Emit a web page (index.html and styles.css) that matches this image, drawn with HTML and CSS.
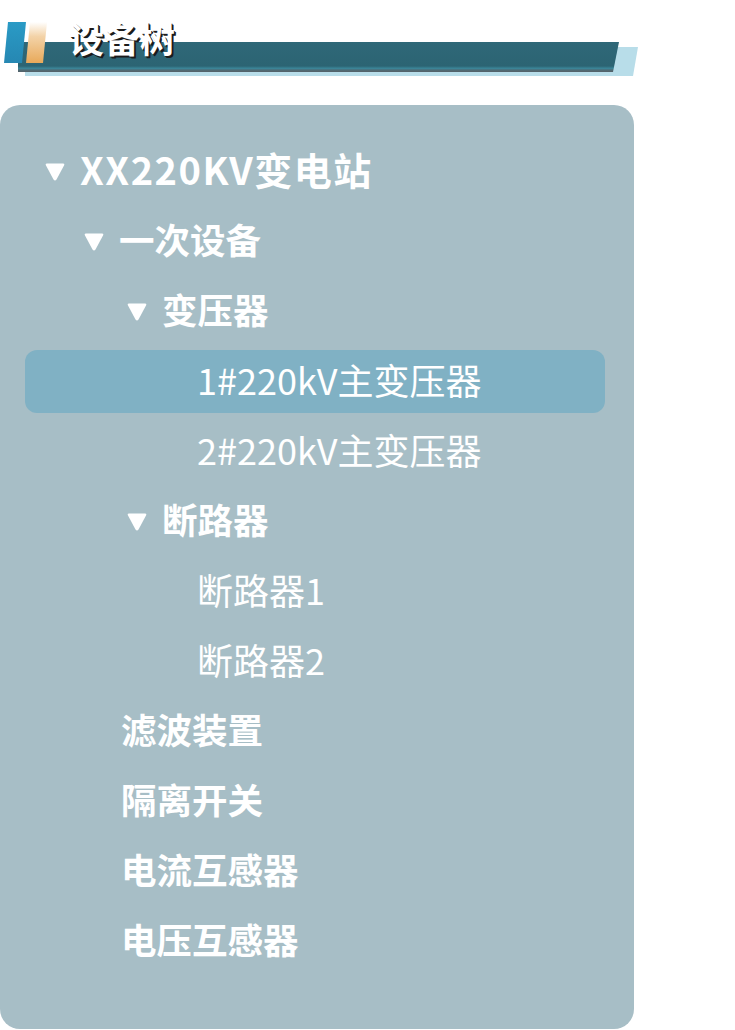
FILE: index.html
```html
<!DOCTYPE html>
<html lang="zh-CN">
<head>
<meta charset="utf-8">
<title>设备树</title>
<link rel="stylesheet" href="styles.css">
</head>
<body>
<header class="head">
  <div class="head-back"></div>
  <div class="head-bar"></div>
  <div class="head-blue"></div>
  <div class="head-orange"></div>
  <h1 class="head-title">设备树</h1>
</header>
<section class="panel">
  <ul class="tree">
    <li class="row lv1"><span class="tri"><svg viewBox="0 0 20 18"><path d="M2 0.5 H18 Q20 0.5 19 2.4 L11.5 16.4 Q10 18.6 8.5 16.4 L1 2.4 Q0 0.5 2 0.5 Z"/></svg></span><span class="label bold">XX220KV变电站</span></li>
    <li class="row lv2"><span class="tri"><svg viewBox="0 0 20 18"><path d="M2 0.5 H18 Q20 0.5 19 2.4 L11.5 16.4 Q10 18.6 8.5 16.4 L1 2.4 Q0 0.5 2 0.5 Z"/></svg></span><span class="label bold">一次设备</span></li>
    <li class="row lv3"><span class="tri"><svg viewBox="0 0 20 18"><path d="M2 0.5 H18 Q20 0.5 19 2.4 L11.5 16.4 Q10 18.6 8.5 16.4 L1 2.4 Q0 0.5 2 0.5 Z"/></svg></span><span class="label bold">变压器</span></li>
    <li class="row lv4 active"><span class="tri empty"></span><span class="label">1#220kV主变压器</span></li>
    <li class="row lv4"><span class="tri empty"></span><span class="label">2#220kV主变压器</span></li>
    <li class="row lv3"><span class="tri"><svg viewBox="0 0 20 18"><path d="M2 0.5 H18 Q20 0.5 19 2.4 L11.5 16.4 Q10 18.6 8.5 16.4 L1 2.4 Q0 0.5 2 0.5 Z"/></svg></span><span class="label bold">断路器</span></li>
    <li class="row lv4"><span class="tri empty"></span><span class="label">断路器1</span></li>
    <li class="row lv4"><span class="tri empty"></span><span class="label">断路器2</span></li>
    <li class="row lv2 leaf"><span class="tri empty"></span><span class="label bold">滤波装置</span></li>
    <li class="row lv2 leaf"><span class="tri empty"></span><span class="label bold">隔离开关</span></li>
    <li class="row lv2 leaf"><span class="tri empty"></span><span class="label bold">电流互感器</span></li>
    <li class="row lv2 leaf"><span class="tri empty"></span><span class="label bold">电压互感器</span></li>
  </ul>
</section>
</body>
</html>
```

FILE: styles.css
```css
* { box-sizing: border-box; }
html, body { margin: 0; padding: 0; background: #ffffff; }
body {
  width: 735px;
  height: 1030px;
  overflow: hidden;
  font-family: "Noto Sans CJK SC", "Noto Sans", sans-serif;
}

/* ---------- header ---------- */
.head {
  position: relative;
  height: 105px;
}
.head-back {
  position: absolute;
  left: 25px;
  top: 47px;
  width: 613px;
  height: 29px;
  background: #b8dde9;
  clip-path: polygon(0 0, 100% 0, calc(100% - 5px) 100%, 0 100%);
}
.head-bar {
  position: absolute;
  left: 18px;
  top: 42px;
  width: 601px;
  height: 30px;
  background: linear-gradient(180deg, #2f6878 0%, #2c6473 80%, #3a8598 88%, #4f6a74 94%, #556068 100%);
  clip-path: polygon(0 0, 100% 0, calc(100% - 6px) 100%, 0 100%);
}
.head-blue {
  position: absolute;
  left: 4px;
  top: 22px;
  width: 22px;
  height: 41px;
  background: linear-gradient(180deg, #2a9bc6 0%, #2687b2 100%);
  clip-path: polygon(4px 0, 100% 0, calc(100% - 4px) 100%, 0 100%);
}
.head-orange {
  position: absolute;
  left: 26px;
  top: 22px;
  width: 21px;
  height: 41px;
  background: linear-gradient(180deg, #ffffff 0%, #f3d3a8 35%, #e8a95a 100%);
  clip-path: polygon(4px 0, 100% 0, calc(100% - 4px) 100%, 0 100%);
}
.head-title {
  position: absolute;
  left: 69px;
  top: 16px;
  margin: 0;
  font-size: 35px;
  line-height: 44px;
  font-weight: 700;
  color: #ffffff;
  letter-spacing: 0.5px;
  text-shadow: 2px 2px 0 #1b1b1b, 1px 1px 0 #1b1b1b;
}

/* ---------- panel ---------- */
.panel {
  width: 634px;
  height: 924px;
  background: #a7bec6;
  border-radius: 20px;
  padding: 35px 29px 0 25px;
}
.tree {
  list-style: none;
  margin: 0;
  padding: 0;
  display: flex;
  flex-direction: column;
  gap: 7px;
}
.row {
  height: 63px;
  display: flex;
  align-items: center;
  gap: 15px;
  border-radius: 12px;
  color: #ffffff;
}
.row.active { background: #80b1c4; }
.lv1 { padding-left: 20px; }
.lv2 { padding-left: 59px; }
.lv2.leaf { padding-left: 61px; }
.lv3 { padding-left: 102px; }
.lv4 { padding-left: 137px; }

.tri {
  width: 20px;
  height: 18px;
  flex: none;
  display: block;
}
.tri svg { display: block; width: 20px; height: 18px; fill: #ffffff; }

.label {
  font-size: 36px;
  line-height: 40px;
  padding-bottom: 6px;
  font-weight: 400;
  white-space: nowrap;
}
.label.bold { font-weight: 700; font-size: 35.5px; }
.lv1 .label.bold { font-size: 38px; letter-spacing: 1.5px; }
```
